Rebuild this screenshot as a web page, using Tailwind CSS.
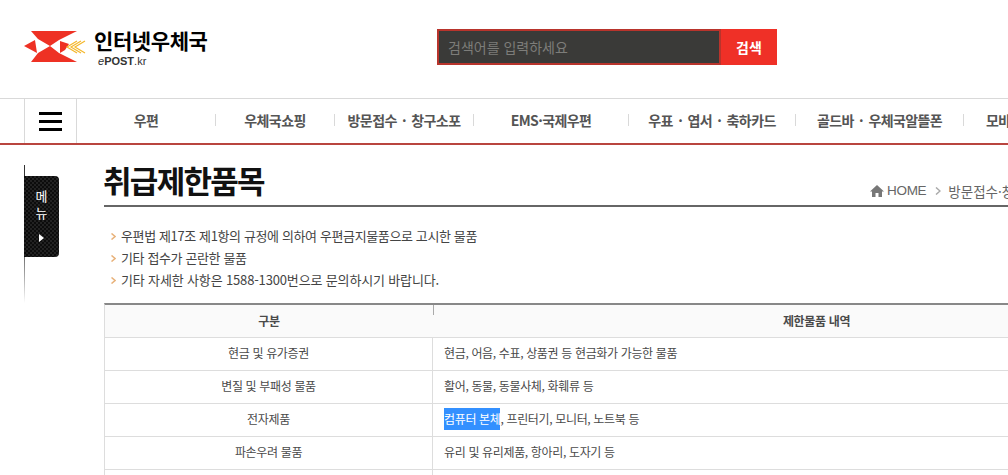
<!DOCTYPE html>
<html lang="ko">
<head>
<meta charset="utf-8">
<script src="https://cdn.jsdelivr.net/npm/@tailwindcss/browser@4"></script>
<title>취급제한품목</title>
</head>
<body class="bg-white">
<div class="w-[1008px] h-[475px] overflow-hidden relative font-['Noto_Sans_CJK_KR',sans-serif] text-[#444]">
  <header class="h-[98px] flex">
    <div class="w-[437px] pl-[24px] pt-[26px] flex items-start">
      <svg width="68" height="40" viewBox="0 0 68 40" class="shrink-0">
        <path d="M7 5H53L35 14 26 20 14 13Z" fill="#ee3124"/>
        <path d="M0 20 11 14 13 27Z" fill="#ee3124"/>
        <path d="M36 15 45 18 41 24 36 27Z" fill="#ee3124"/>
        <path d="M7 36H53L35 27 26 20 14 27Z" fill="#ee3124"/>
        <path d="M53 15 43 21 53 27M57 15 47 21 57 27M61 15 51 21 61 27" stroke="#f4b72c" stroke-width="1.2" fill="none"/>
      </svg>
      <div class="ml-[2px] flex flex-col">
        <span class="text-[21px] leading-[28px] font-bold text-black tracking-[-0.4px]">인터넷우체국</span>
        <span class="text-[11px] leading-[14px] pl-[4px] text-[#333] font-['Liberation_Sans',sans-serif]"><i>e</i><b>POST</b><span class="font-normal">.kr</span></span>
      </div>
    </div>
    <div class="pt-[29px]">
      <form class="flex w-[340px] h-[36px]">
        <div class="w-[284px] h-full bg-[#3a3a38] border-2 border-[#b8342c] pl-[9px] flex items-center text-[14px] text-[#7d7d7a]">검색어를 입력하세요</div>
        <div class="w-[56px] h-full bg-[#ef3027] flex items-center justify-center text-[14px] font-bold text-white">검색</div>
      </form>
    </div>
  </header>

  <nav class="h-[47px] border-t border-[#d9d9d9] border-b-2 border-b-[#b9453f] flex relative">
    <div class="ml-[24px] w-[53px] shrink-0 border-x border-[#d9d9d9] flex flex-col items-center justify-center gap-[5px]">
      <span class="block w-[23px] h-[3px] bg-black"></span>
      <span class="block w-[23px] h-[3px] bg-black"></span>
      <span class="block w-[23px] h-[3px] bg-black"></span>
    </div>
    <div class="flex items-center text-[14px] font-bold text-[#555] tracking-[-0.6px] [word-spacing:2px] whitespace-nowrap -mt-[2px]">
      <div class="w-[138px] text-center">우편</div>
      <div class="w-px h-[12px] bg-[#d9d9d9]"></div>
      <div class="w-[118px] text-center">우체국쇼핑</div>
      <div class="w-px h-[12px] bg-[#d9d9d9]"></div>
      <div class="w-[138px] text-center">방문접수 · 창구소포</div>
      <div class="w-px h-[12px] bg-[#d9d9d9]"></div>
      <div class="w-[154px] text-center">EMS·국제우편</div>
      <div class="w-px h-[12px] bg-[#d9d9d9]"></div>
      <div class="w-[166px] text-center">우표 · 엽서 · 축하카드</div>
      <div class="w-px h-[12px] bg-[#d9d9d9]"></div>
      <div class="w-[167px] text-center">골드바 · 우체국알뜰폰</div>
      <div class="w-px h-[12px] bg-[#d9d9d9]"></div>
      <div class="pl-[22px]">모바일</div>
    </div>
  </nav>

  <div class="flex">
    <aside class="w-[104px] shrink-0 pl-[24px] pt-[20px]">
      <div class="w-px h-[138px] bg-gradient-to-b from-[#333] via-[#333] to-white relative">
        <div class="absolute left-0 top-[11px] w-[35px] h-[81px] rounded-r-[4px] bg-[repeating-conic-gradient(#222_0_25%,#0c0c0c_0_50%)] bg-[length:4px_4px] flex flex-col items-center pt-[11px] text-white text-[13px] leading-[17px]">
          <span>메</span>
          <span>뉴</span>
          <svg width="5" height="8" viewBox="0 0 5 8" class="mt-[13px]"><path d="M0 0 5 4 0 8Z" fill="#fff"/></svg>
        </div>
      </div>
    </aside>

    <main class="w-[1000px] shrink-0">
      <div class="h-[62px] border-b-2 border-[#666] flex justify-between">
        <h1 class="text-[31px] leading-[44px] pt-[13px] -ml-[1px] font-bold text-[#111] tracking-[-1.7px]">취급제한품목</h1>
        <div class="flex items-center gap-[3px] h-[20px] mt-[36px] w-[234px] text-[13.5px] text-[#666] whitespace-nowrap shrink-0">
          <svg width="14" height="12" viewBox="0 0 14 12"><path d="M7 0 14 6.500H12V12H8.500V8H5.500V12H2V6.500H0Z" fill="#777"/></svg>
          <span class="font-['Liberation_Sans',sans-serif] tracking-[-0.3px]">HOME</span>
          <svg width="6" height="8" viewBox="0 0 6 8" class="ml-[6px] mr-[4px]"><path d="M1 0.500 5 4 1 7.500" stroke="#aaa" stroke-width="1.500" fill="none"/></svg>
          <span>방문접수·창구소포</span>
        </div>
      </div>

      <ul class="mt-[18px] text-[13px] leading-[22px] text-[#444]">
        <li class="flex items-center gap-[5px] pl-[7px] tracking-[-0.38px]"><svg width="5" height="7" viewBox="0 0 5 7" class="shrink-0"><path d="M0.500 0.500 4 3.500 0.500 6.500" stroke="#e8b27a" stroke-width="1.500" fill="none"/></svg>우편법 제17조 제1항의 규정에 의하여 우편금지물품으로 고시한 물품</li>
        <li class="flex items-center gap-[5px] pl-[7px] tracking-[-0.38px]"><svg width="5" height="7" viewBox="0 0 5 7" class="shrink-0"><path d="M0.500 0.500 4 3.500 0.500 6.500" stroke="#e8b27a" stroke-width="1.500" fill="none"/></svg>기타 접수가 곤란한 물품</li>
        <li class="flex items-center gap-[5px] pl-[7px] tracking-[-0.15px]"><svg width="5" height="7" viewBox="0 0 5 7" class="shrink-0"><path d="M0.500 0.500 4 3.500 0.500 6.500" stroke="#e8b27a" stroke-width="1.500" fill="none"/></svg>기타 자세한 사항은 1588-1300번으로 문의하시기 바랍니다.</li>
      </ul>

      <div class="mt-[12px] w-[1096px] border-t-2 border-[#888] border-l border-l-[#ddd] text-[12px] text-[#4a4a4a] tracking-[-0.35px]">
        <div class="flex h-[33px] bg-[#fafafa] border-b border-[#ddd] font-bold relative">
          <div class="w-[328px] flex items-center justify-center">구분</div>
          <div class="absolute left-[328px] top-0 w-px h-[10px] bg-[#aaa]"></div>
          <div class="flex-1 flex items-center justify-center">제한물품 내역</div>
        </div>
        <div class="flex h-[33px] border-b border-[#ddd]">
          <div class="w-[328px] flex items-center justify-center border-r border-[#ddd] pb-[2px]">현금 및 유가증권</div>
          <div class="flex-1 flex items-center pl-[11px] pb-[2px]">현금, 어음, 수표, 상품권 등 현금화가 가능한 물품</div>
        </div>
        <div class="flex h-[33px] border-b border-[#ddd]">
          <div class="w-[328px] flex items-center justify-center border-r border-[#ddd] pb-[2px]">변질 및 부패성 물품</div>
          <div class="flex-1 flex items-center pl-[11px] pb-[2px]">활어, 동물, 동물사체, 화훼류 등</div>
        </div>
        <div class="flex h-[33px] border-b border-[#ddd]">
          <div class="w-[328px] flex items-center justify-center border-r border-[#ddd] pb-[2px]">전자제품</div>
          <div class="flex-1 flex items-center pl-[11px] pb-[2px]"><span class="bg-[#3390ff] text-white leading-[22px]">컴퓨터 본체</span>, 프린터기, 모니터, 노트북 등</div>
        </div>
        <div class="flex h-[33px] border-b border-[#ddd]">
          <div class="w-[328px] flex items-center justify-center border-r border-[#ddd] pb-[2px]">파손우려 물품</div>
          <div class="flex-1 flex items-center pl-[11px] pb-[2px]">유리 및 유리제품, 항아리, 도자기 등</div>
        </div>
        <div class="flex h-[33px]">
          <div class="w-[328px] border-r border-[#ddd]"></div>
          <div class="flex-1"></div>
        </div>
      </div>
    </main>
  </div>
</div>
</body>
</html>
